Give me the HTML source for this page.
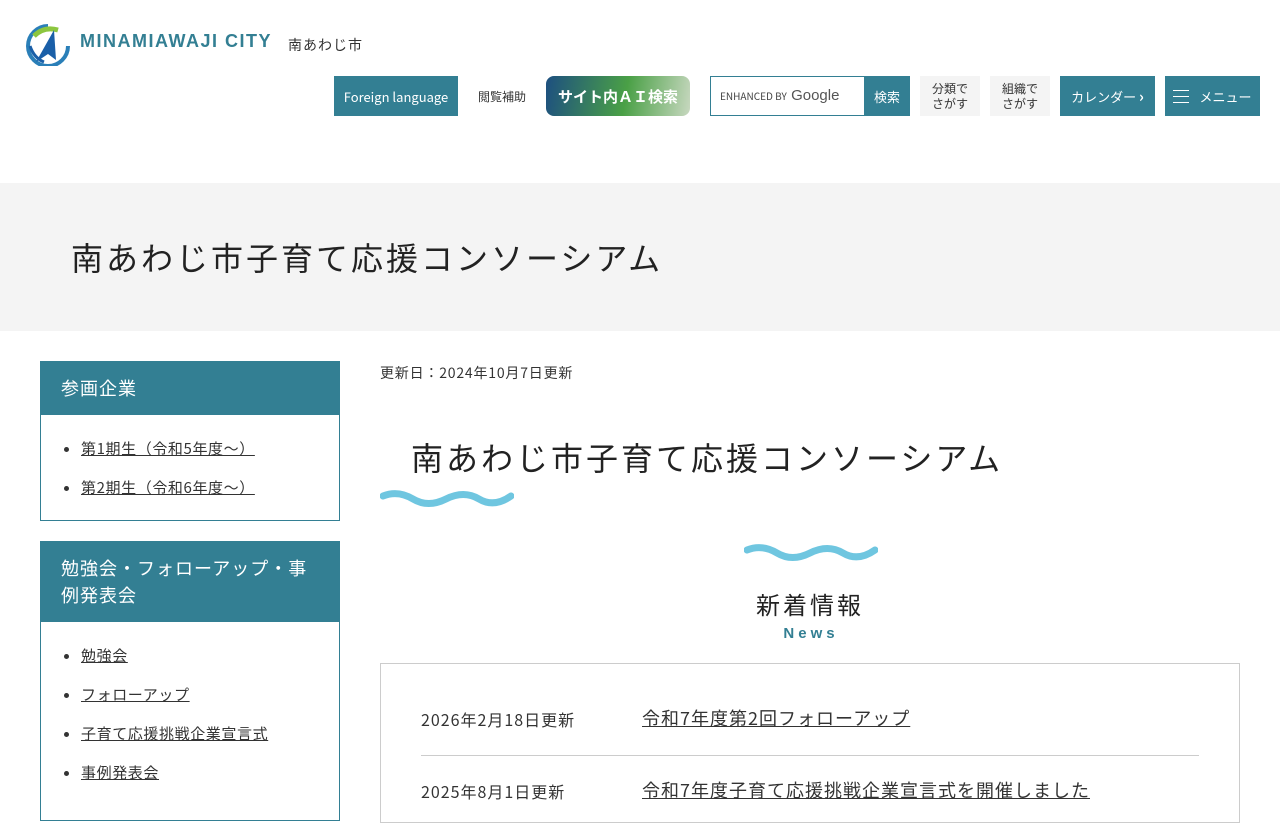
<!DOCTYPE html>
<html><head><meta charset="utf-8"><style>
*{margin:0;padding:0;box-sizing:border-box}
body{width:1280px;height:800px;overflow:hidden;background:#fff;font-family:"Noto Sans CJK JP",sans-serif;color:#333;position:relative;letter-spacing:1px}
.abs{position:absolute}
.teal{background:#337f93;color:#fff}
.btn{position:absolute;display:flex;align-items:center;justify-content:center;font-size:13px;letter-spacing:0}
.gray{background:#f4f4f4;color:#333;font-size:12px;line-height:15px;text-align:center}
a{color:#333}
.side{position:absolute;left:40px;width:300px;border:1px solid #337f93}
.side h3{background:#337f93;color:#fff;font-weight:normal;font-size:18px;padding:13px 20px;line-height:27px;letter-spacing:1px}
.side ul{padding:14px 0 12px 40px}
.side li{font-size:15px;line-height:39px;letter-spacing:0.6px}
.wave{position:absolute}
</style></head><body>
<svg class="abs" style="left:26px;top:24px" width="44" height="42" viewBox="0 0 44 42"><path d="M22 2A20 20 0 1 0 42 22" fill="none" stroke="#2a7fb8" stroke-width="4"/><path d="M8 12Q18 2 32 6" fill="none" stroke="#8cc63f" stroke-width="5"/><path d="M10 38L28 6L30 36L22 30Z" fill="#1a5fa8"/><path d="M4 22Q8 34 18 38" fill="none" stroke="#1a5fa8" stroke-width="3"/></svg>
<div class="abs" style="left:80px;top:31px;font-size:18px;font-weight:bold;color:#337f93;letter-spacing:1.5px;font-family:'Liberation Sans',sans-serif">MINAMIAWAJI CITY</div>
<div class="abs" style="left:288px;top:35px;font-size:14px;letter-spacing:1px">南あわじ市</div>
<div class="btn teal" style="left:334px;top:76px;width:124px;height:40px">Foreign language</div>
<div class="btn" style="left:470px;top:76px;width:64px;height:40px;font-size:12px">閲覧補助</div>
<div class="btn" style="left:546px;top:76px;width:144px;height:40px;border-radius:8px;background:linear-gradient(100deg,#1d4f80,#4aa046 55%,#c8d8c0);color:#fff;font-weight:bold;font-size:15px">サイト内ＡＩ検索</div>
<div class="abs" style="left:710px;top:76px;width:155px;height:40px;border:1px solid #337f93;background:#fff;font-size:10px;padding:10px 9px;color:#444;letter-spacing:0">ENHANCED BY <span style="font-size:15px;color:#555;margin-left:2px;font-family:'Liberation Sans',sans-serif">Google</span></div>
<div class="btn teal" style="left:864px;top:76px;width:46px;height:40px">検索</div>
<div class="btn gray" style="left:920px;top:76px;width:60px;height:40px">分類で<br>さがす</div>
<div class="btn gray" style="left:990px;top:76px;width:60px;height:40px">組織で<br>さがす</div>
<div class="btn teal" style="left:1060px;top:76px;width:95px;height:40px">カレンダー&nbsp;<b style="font-size:15px">›</b></div>
<div class="btn teal" style="left:1165px;top:76px;width:95px;height:40px"><span style="display:inline-block;width:16px;height:13px;border-top:1px solid #fff;border-bottom:1px solid #fff;position:relative;margin-right:10px"><span style="position:absolute;left:0;right:0;top:5px;border-top:1px solid #fff"></span></span>メニュー</div>
<div class="abs" style="left:0;top:183px;width:1280px;height:148px;background:#f4f4f4"></div>
<div class="abs" style="left:71px;top:234px;font-size:32px;letter-spacing:3px;color:#222;line-height:46px">南あわじ市子育て応援コンソーシアム</div>
<div class="side" style="top:361px;height:160px"><h3>参画企業</h3><ul><li><a href="#">第1期生（令和5年度～）</a></li><li><a href="#">第2期生（令和6年度～）</a></li></ul></div>
<div class="side" style="top:541px;height:280px"><h3>勉強会・フォローアップ・事例発表会</h3><ul><li><a href="#">勉強会</a></li><li><a href="#">フォローアップ</a></li><li><a href="#">子育て応援挑戦企業宣言式</a></li><li><a href="#">事例発表会</a></li></ul></div>
<div class="abs" style="left:380px;top:363px;font-size:14px;letter-spacing:0.8px">更新日：2024年10月7日更新</div>
<div class="abs" style="left:411px;top:434px;font-size:32px;letter-spacing:3px;color:#222;line-height:46px">南あわじ市子育て応援コンソーシアム</div>
<svg class="wave" style="left:380px;top:490px" width="134" height="20" viewBox="0 0 134 20"><path d="M3 6Q18 0 33 9T66 9T99 9T131 6" fill="none" stroke="#3fb3d6" stroke-width="7" opacity=".75" stroke-linecap="round"/></svg>
<svg class="wave" style="left:744px;top:544px" width="134" height="20" viewBox="0 0 134 20"><path d="M3 6Q18 0 33 9T66 9T99 9T131 6" fill="none" stroke="#3fb3d6" stroke-width="7" opacity=".75" stroke-linecap="round"/></svg>
<div class="abs" style="left:0;width:1620px;top:587px;text-align:center;font-size:24px;letter-spacing:3px;color:#222;line-height:34px">新着情報</div>
<div class="abs" style="left:0;width:1622px;top:625px;text-align:center;font-size:15px;font-weight:bold;letter-spacing:4px;color:#337f93;font-family:'Liberation Sans',sans-serif">News</div>
<div class="abs" style="left:380px;top:663px;width:860px;height:160px;border:1px solid #ccc"></div>
<div class="abs" style="left:421px;top:707px;font-size:16px">2026年2月18日更新</div>
<div class="abs" style="left:642px;top:705px;font-size:18px"><a href="#">令和7年度第2回フォローアップ</a></div>
<div class="abs" style="left:421px;top:755px;width:778px;border-top:1px solid #ccc"></div>
<div class="abs" style="left:421px;top:779px;font-size:16px">2025年8月1日更新</div>
<div class="abs" style="left:642px;top:777px;font-size:18px"><a href="#">令和7年度子育て応援挑戦企業宣言式を開催しました</a></div>
</body></html>
